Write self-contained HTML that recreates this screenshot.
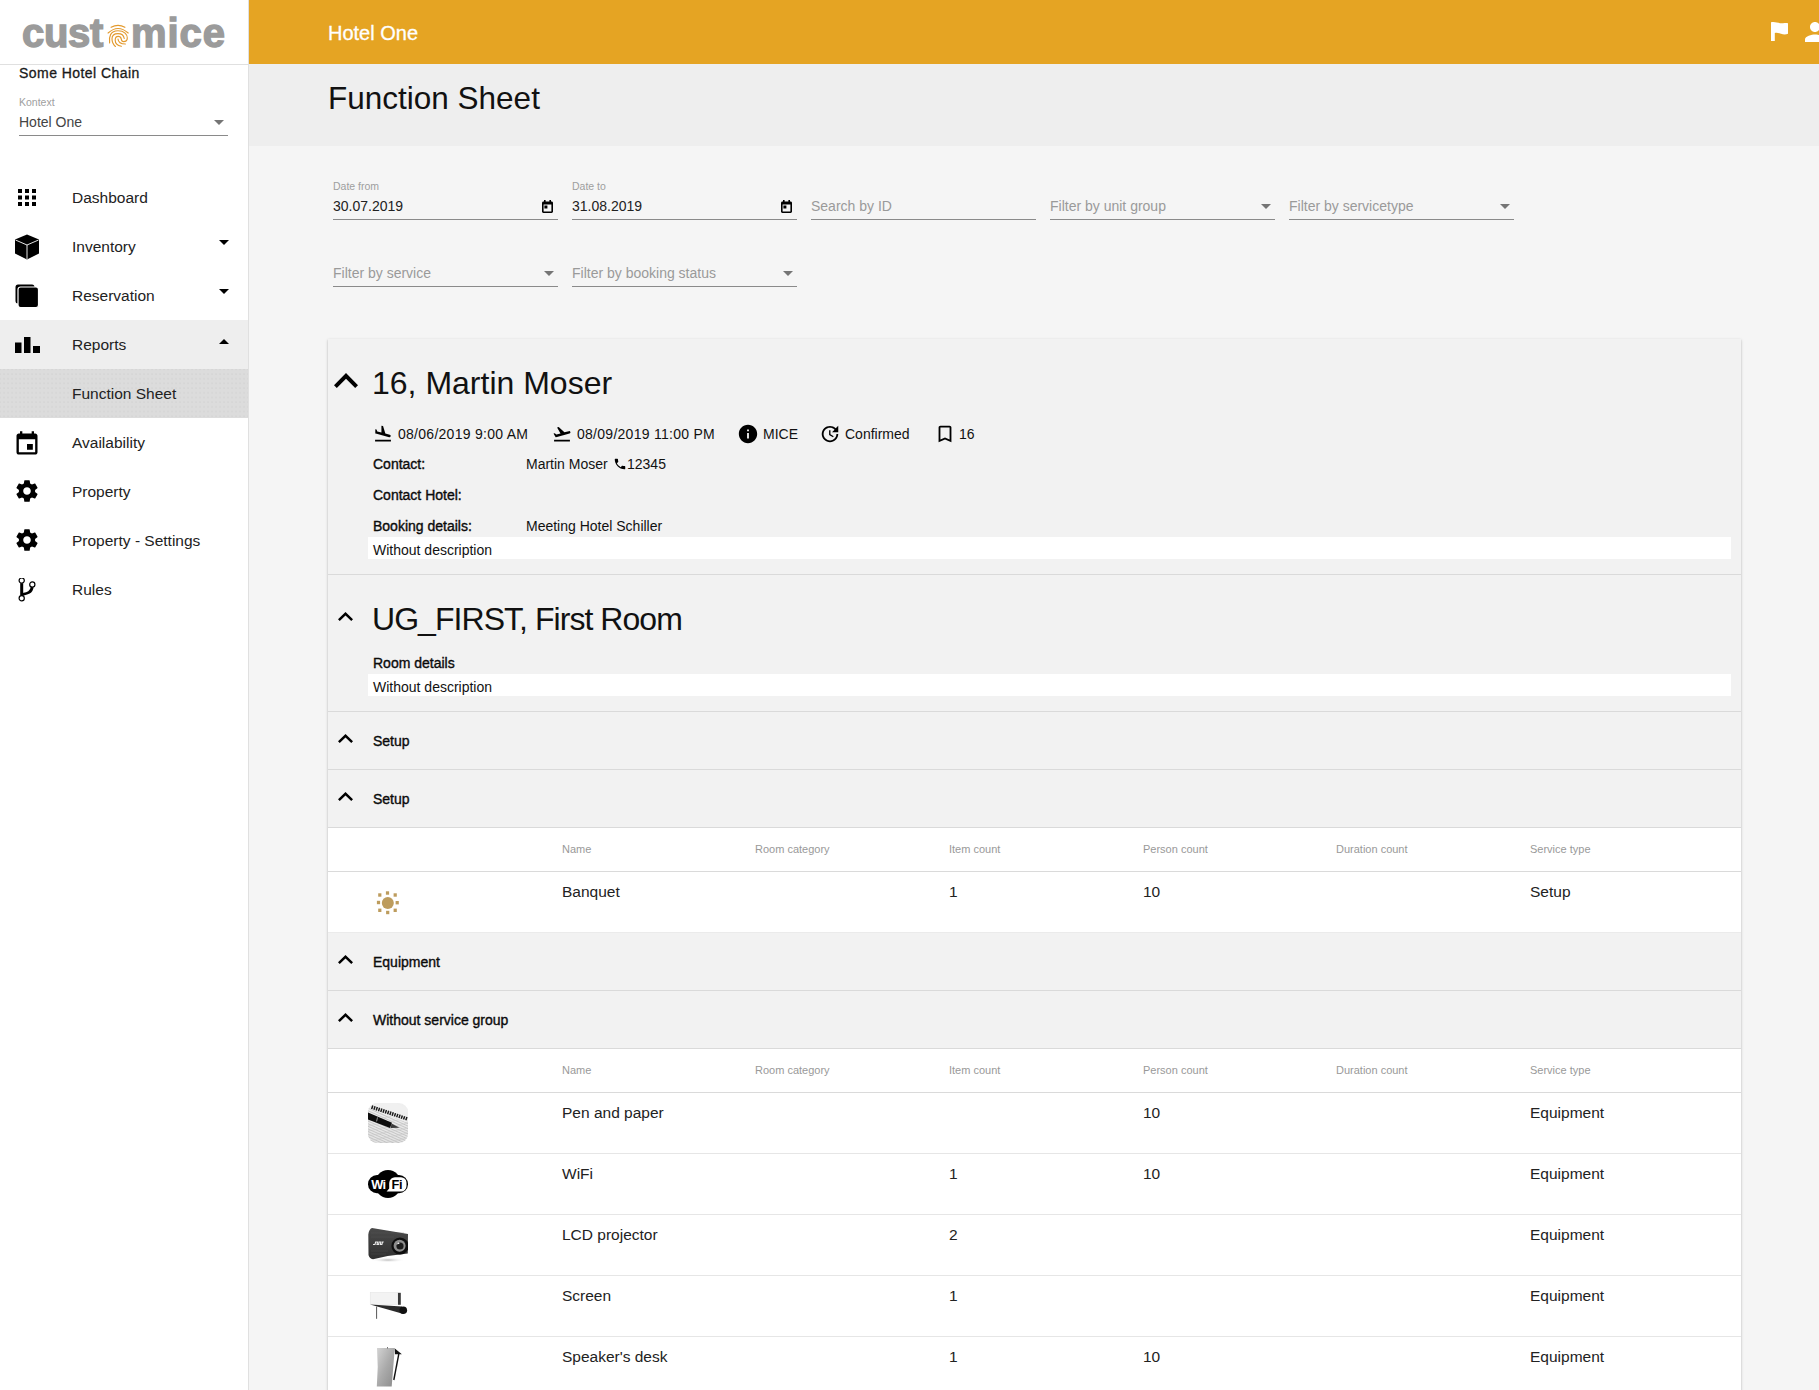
<!DOCTYPE html>
<html><head><meta charset="utf-8">
<style>
*{box-sizing:border-box;margin:0;padding:0}
html,body{width:1819px;height:1390px;overflow:hidden;background:#f5f5f5;font-family:"Liberation Sans",sans-serif;color:#000}
.abs{position:absolute}
#side{position:absolute;left:0;top:0;width:249px;height:1390px;background:#fff;border-right:1px solid #e0e0e0}
#logo{position:absolute;left:0;top:0;width:248px;height:65px;border-bottom:1px solid #e0e0e0}
#top{position:absolute;left:249px;top:0;width:1570px;height:64px;background:#e5a423}
#hdr{position:absolute;left:249px;top:64px;width:1570px;height:82px;background:#eeeeee}
.nav{position:absolute;left:0;width:248px;height:49px}
.nav .t{position:absolute;left:72px;top:0;line-height:49px;font-size:15.5px;color:#222}
.nav svg{position:absolute}
.tri{position:absolute;width:0;height:0;border-left:5px solid transparent;border-right:5px solid transparent}
.fld{position:absolute;width:225px;height:1px;background:#8a8a8a}
.lbl{position:absolute;font-size:10.5px;color:#9e9e9e}
.val{position:absolute;font-size:14px;color:#222}
.ph{position:absolute;font-size:14px;color:#9a9a9a}
#card{position:absolute;left:328px;top:339px;width:1413px;height:1100px;background:#f2f2f2;box-shadow:0 1px 3px rgba(0,0,0,.2),0 1px 1px rgba(0,0,0,.14),0 2px 1px -1px rgba(0,0,0,.12)}
.hl{position:absolute;left:0;width:1413px;height:1px;background:#dcdcdc}
.bold{font-weight:bold;letter-spacing:-0.35px}
.c14{position:absolute;font-size:14px;color:#111}
.wbox{position:absolute;left:40px;width:1363px;background:#fff}
.white{position:absolute;left:0;width:1413px;background:#fff}
.ct{position:absolute;white-space:nowrap;color:#111}
.ab{position:absolute}
.b{-webkit-text-stroke:0.35px #000}
.th{color:#999}
.td{color:#222}
</style></head><body>
<div id="side">
  <div id="logo">
    <div class="abs" style="left:22px;top:5px;font-size:40px;font-weight:bold;color:#9b9b9b;-webkit-text-stroke:1.4px #9b9b9b;letter-spacing:-0.3px;line-height:56px">cust</div>
    <svg class="abs" style="left:104px;top:20px" width="30" height="30" viewBox="0 0 30 30" fill="none" stroke="#e39a2e" stroke-width="1.15" stroke-linecap="round">
      <path d="M7.1 7.3 Q14 3.6 20.9 7.3"/><path d="M4.1 13 Q14 4 24.2 13"/>
      <path d="M5.6 22.9 C4.8 17 6.2 10.8 14 10.8 C20.5 10.8 23.3 14.5 23.3 18 C23.3 20.5 21.5 21.6 19.5 21.6 C18 21.6 17.5 20.5 17.3 19.2 C17 17.5 16 16.4 14.2 16.4 C12.3 16.4 11.2 18 11.2 20.3 C11.2 23 13.5 25.5 17.3 26.3"/>
      <path d="M11.4 26.5 C8.5 24 8 20.5 8 18.8 C8 15.5 10.5 13.6 14 13.6 C17.5 13.6 19.8 15.8 20.2 18.5"/>
      <path d="M14 19 C14.3 22.5 16.5 24 21.4 24"/>
    </svg>
    <div class="abs" style="left:131px;top:5px;font-size:40px;font-weight:bold;color:#9b9b9b;-webkit-text-stroke:1.4px #9b9b9b;letter-spacing:0.9px;line-height:56px">mice</div>
  </div>
  <div class="abs" style="left:19px;top:64px;font-size:14px;-webkit-text-stroke:0.3px #1a1a1a;letter-spacing:0.45px;color:#1a1a1a;line-height:18px">Some Hotel Chain</div>
  <div class="abs" style="left:19px;top:96px;font-size:10.5px;color:#a0a0a0;line-height:12px">Kontext</div>
  <div class="abs" style="left:19px;top:114px;font-size:14px;color:#444;line-height:16px">Hotel One</div>
  <div class="tri" style="left:214px;top:120px;border-top:5px solid #757575"></div>
  <div class="abs" style="left:19px;top:135px;width:209px;height:1px;background:#8a8a8a"></div>
  <div class="nav" style="top:173px">
    <svg style="left:18px;top:16px" width="18" height="18" viewBox="0 0 18 18"><g fill="#000"><rect x="0" y="0" width="4" height="4"/><rect x="7" y="0" width="4" height="4"/><rect x="14" y="0" width="4" height="4"/><rect x="0" y="6.5" width="4" height="4"/><rect x="7" y="6.5" width="4" height="4"/><rect x="14" y="6.5" width="4" height="4"/><rect x="0" y="13" width="4" height="4"/><rect x="7" y="13" width="4" height="4"/><rect x="14" y="13" width="4" height="4"/></g></svg>
    <div class="t">Dashboard</div>
  </div>
  <div class="nav" style="top:222px">
    <svg style="left:14px;top:12px" width="26" height="26" viewBox="0 0 26 26"><path d="M13 0.5 L25 5.5 L25 19.5 L13 25.5 L1 19.5 L1 5.5 Z" fill="#000"/><path d="M1.5 6 L13 11 L24.5 6 M13 11 L13 25" stroke="#fff" stroke-width="0.9" fill="none"/></svg>
    <div class="t">Inventory</div>
    <div class="tri" style="left:219px;top:18px;border-top:5px solid #000"></div>
  </div>
  <div class="nav" style="top:271px">
    <svg style="left:15px;top:13px" width="24" height="24" viewBox="0 0 24 24"><rect x="0.5" y="0.5" width="19" height="19" rx="2.5" fill="#000"/><rect x="3" y="3" width="20.5" height="20.5" rx="2.5" fill="#000" stroke="#fff" stroke-width="1.2"/></svg>
    <div class="t">Reservation</div>
    <div class="tri" style="left:219px;top:18px;border-top:5px solid #000"></div>
  </div>
  <div class="nav" style="top:320px;background:#eeeeee">
    <svg style="left:15px;top:17px" width="25" height="16" viewBox="0 0 25 16"><rect x="0" y="5.5" width="6.5" height="10.5" fill="#000"/><rect x="9" y="0" width="6.5" height="16" fill="#000"/><rect x="18" y="9" width="7" height="7" fill="#000"/></svg>
    <div class="t">Reports</div>
    <div class="tri" style="left:219px;top:19px;border-bottom:5px solid #000"></div>
  </div>
  <div class="nav" style="top:369px;background-color:#dcdcdc;background-image:radial-gradient(circle at 1px 1px,#d5d5d5 0.6px,transparent 0.9px);background-size:4px 4.7px;background-position:3px 4px">
    <div class="t">Function Sheet</div>
  </div>
  <div class="nav" style="top:418px">
    <svg style="left:13px;top:12px" width="28" height="28" viewBox="0 0 24 24"><path fill="#000" d="M17 12h-5v5h5v-5zM16 1v2H8V1H6v2H5c-1.11 0-1.99.9-1.99 2L3 19c0 1.1.89 2 2 2h14c1.1 0 2-.9 2-2V5c0-1.1-.9-2-2-2h-1V1h-2zm3 18H5V8h14v11z"/></svg>
    <div class="t">Availability</div>
  </div>
  <div class="nav" style="top:467px">
    <svg style="left:14px;top:11px" width="26" height="26" viewBox="0 0 24 24"><path fill="#000" d="M19.43 12.98c.04-.32.07-.64.07-.98s-.03-.66-.07-.98l2.11-1.65c.19-.15.24-.42.12-.64l-2-3.46c-.12-.22-.39-.3-.61-.22l-2.49 1c-.52-.4-1.08-.73-1.690-.98l-.38-2.65C14.46 2.18 14.25 2 14 2h-4c-.25 0-.46.18-.49.42l-.38 2.65c-.61.25-1.17.59-1.69.98l-2.49-1c-.23-.09-.49 0-.61.22l-2 3.46c-.13.22-.07.49.12.64l2.11 1.65c-.04.32-.07.65-.07.98s.03.66.07.98l-2.11 1.65c-.19.15-.24.42-.12.64l2 3.46c.12.22.39.3.61.22l2.49-1c.52.4 1.08.73 1.69.98l.38 2.65c.03.24.24.42.49.42h4c.25 0 .46-.18.49-.42l.38-2.65c.61-.25 1.17-.59 1.69-.98l2.49 1c.23.09.49 0 .61-.22l2-3.46c.12-.22.07-.49-.12-.64l-2.11-1.65zM12 15.5c-1.93 0-3.5-1.57-3.5-3.5s1.57-3.5 3.5-3.5 3.5 1.57 3.5 3.5-1.57 3.5-3.5 3.5z"/></svg>
    <div class="t">Property</div>
  </div>
  <div class="nav" style="top:516px">
    <svg style="left:14px;top:11px" width="26" height="26" viewBox="0 0 24 24"><path fill="#000" d="M19.43 12.98c.04-.32.07-.64.07-.98s-.03-.66-.07-.98l2.11-1.65c.19-.15.24-.42.12-.64l-2-3.46c-.12-.22-.39-.3-.61-.22l-2.49 1c-.52-.4-1.08-.73-1.690-.98l-.38-2.65C14.46 2.180 14.25 2 14 2h-4c-.25 0-.46.18-.49.42l-.38 2.65c-.61.25-1.17.59-1.69.98l-2.49-1c-.23-.09-.49 0-.61.22l-2 3.46c-.13.22-.07.49.12.64l2.11 1.65c-.04.32-.07.65-.07.98s.03.66.07.98l-2.11 1.65c-.19.15-.24.42-.12.64l2 3.46c.12.22.39.3.61.22l2.49-1c.52.4 1.08.73 1.69.98l.38 2.65c.03.24.24.42.49.42h4c.25 0 .46-.18.49-.42l.38-2.65c.61-.25 1.17-.59 1.69-.98l2.49 1c.23.09.49 0 .61-.22l2-3.46c.12-.22.07-.49-.12-.64l-2.11-1.65zM12 15.5c-1.93 0-3.5-1.57-3.5-3.5s1.57-3.5 3.5-3.5 3.5 1.57 3.5 3.5-1.57 3.5-3.5 3.5z"/></svg>
    <div class="t">Property - Settings</div>
  </div>
  <div class="nav" style="top:565px">
    <svg style="left:17px;top:13px" width="20" height="24" viewBox="0 0 20 24" fill="none" stroke="#000"><circle cx="4.7" cy="2.6" r="2.6" stroke-width="1.2"/><circle cx="15.3" cy="6.4" r="2.6" stroke-width="1.2"/><circle cx="4.7" cy="20.3" r="2.6" stroke-width="1.2"/><path d="M4.7 5.2 V17.7" stroke-width="3"/><path d="M4.6 16.6 C9.5 15.5 14.5 15 15.2 9" stroke-width="2.8"/></svg>
    <div class="t">Rules</div>
  </div>
</div>
<div id="top">
  <div class="abs" style="left:79px;top:21px;font-size:20px;color:#fff;-webkit-text-stroke:0.3px #fff;line-height:24px">Hotel One</div>
  <svg class="abs" style="left:1522px;top:22px" width="18" height="20" viewBox="0 0 18 20"><path fill="#fff" d="M0 0.3 C4 -0.8 8 1.5 12 1.2 C14 1 15.5 0.9 17 1.2 L17 11.8 C15 12.6 12.5 12.7 10 11.8 C7.5 10.9 6 10.6 3.8 10.9 L3.8 19 L0 19 Z"/></svg>
  <svg class="abs" style="left:1551px;top:17px" width="30" height="30" viewBox="0 0 24 24"><path fill="#fff" d="M12 12c2.21 0 4-1.790 4-4s-1.79-4-4-4-4 1.79-4 4 1.79 4 4 4zm0 2c-2.67 0-8 1.34-8 4v2h16v-2c0-2.66-5.33-4-8-4z"/></svg>
</div>
<div id="hdr">
  <div class="abs" style="left:79px;top:15px;font-size:31.5px;color:#111;line-height:38px">Function Sheet</div>
</div>

<div class="lbl" style="left:333px;top:180px;line-height:12px">Date from</div>
<div class="val" style="left:333px;top:198px;line-height:16px">30.07.2019</div>
<svg class="abs" style="left:542px;top:200px" width="11" height="13" viewBox="0 0 11 13"><path fill="#000" d="M2 0h1.6v1.5h3.8V0H9v1.5h.6c.8 0 1.4.6 1.4 1.4v8.7c0 .8-.6 1.4-1.4 1.4H1.4C.6 13 0 12.4 0 11.6V2.9c0-.8.6-1.5 1.4-1.5H2zM1.6 4.6v6.8h7.8V4.6zM2.4 5.6h3v3h-3z"/></svg>
<div class="fld" style="left:333px;top:219px"></div>
<div class="lbl" style="left:572px;top:180px;line-height:12px">Date to</div>
<div class="val" style="left:572px;top:198px;line-height:16px">31.08.2019</div>
<svg class="abs" style="left:781px;top:200px" width="11" height="13" viewBox="0 0 11 13"><path fill="#000" d="M2 0h1.6v1.5h3.8V0H9v1.5h.6c.8 0 1.4.6 1.4 1.4v8.7c0 .8-.6 1.4-1.4 1.4H1.4C.6 13 0 12.4 0 11.6V2.9c0-.8.6-1.5 1.4-1.5H2zM1.6 4.6v6.8h7.8V4.6zM2.4 5.6h3v3h-3z"/></svg>
<div class="fld" style="left:572px;top:219px"></div>
<div class="ph" style="left:811px;top:198px;line-height:16px">Search by ID</div>
<div class="fld" style="left:811px;top:219px"></div>
<div class="ph" style="left:1050px;top:198px;line-height:16px">Filter by unit group</div>
<div class="tri" style="left:1261px;top:204px;border-top:5px solid #757575"></div>
<div class="fld" style="left:1050px;top:219px"></div>
<div class="ph" style="left:1289px;top:198px;line-height:16px">Filter by servicetype</div>
<div class="tri" style="left:1500px;top:204px;border-top:5px solid #757575"></div>
<div class="fld" style="left:1289px;top:219px"></div>
<div class="ph" style="left:333px;top:265px;line-height:16px">Filter by service</div>
<div class="tri" style="left:544px;top:271px;border-top:5px solid #757575"></div>
<div class="fld" style="left:333px;top:286px"></div>
<div class="ph" style="left:572px;top:265px;line-height:16px">Filter by booking status</div>
<div class="tri" style="left:783px;top:271px;border-top:5px solid #757575"></div>
<div class="fld" style="left:572px;top:286px"></div>
<div id="card">
<svg class="ab" style="left:6px;top:34px" width="24" height="15" viewBox="6 8 12 7.41" preserveAspectRatio="none"><path d="M12 8l-6 6 1.41 1.41L12 10.83l4.59 4.58L18 14z" fill="#000"/></svg>
<div class="ct " style="left:44px;top:28.11px;font-size:32px;line-height:32px;">16, Martin Moser</div>
<svg class="ab" style="left:45px;top:85px" width="20" height="20" viewBox="0 0 24 24"><path fill="#000" d="M2.5 19h19v2h-19zm7.18-5.73l4.35 1.16 5.31 1.42c.8.21 1.62-.26 1.840-1.06.21-.8-.26-1.62-1.06-1.84l-5.31-1.42-2.76-9.02L10.12 2v8.28L5.15 8.95l-.93-2.32-1.45-.39v5.17l1.6.43 5.31 1.430z"/></svg>
<div class="ct " style="left:70px;top:88.25px;font-size:14px;line-height:14px;letter-spacing:0.27px">08/06/2019 9:00 AM</div>
<svg class="ab" style="left:224px;top:85px" width="20" height="20" viewBox="0 0 24 24"><path fill="#000" d="M2.5 19h19v2h-19zm19.57-9.36c-.21-.8-1.04-1.28-1.84-1.06L14.92 10l-6.9-6.43-1.93.51 4.14 7.17-4.97 1.33-1.97-1.54-1.45.39 1.82 3.16.77 1.33 1.6-.43 5.31-1.42 4.35-1.16L21 11.49c.81-.23 1.28-1.05 1.07-1.85z"/></svg>
<div class="ct " style="left:249px;top:88.25px;font-size:14px;line-height:14px;letter-spacing:0.27px">08/09/2019 11:00 PM</div>
<svg class="ab" style="left:409px;top:84px" width="22" height="22" viewBox="0 0 24 24"><path fill="#000" d="M12 2C6.48 2 2 6.48 2 12s4.48 10 10 10 10-4.48 10-10S17.52 2 12 2zm1 15h-2v-6h2v6zm0-8h-2V7h2v2z"/></svg>
<div class="ct " style="left:435px;top:88.25px;font-size:14px;line-height:14px;">MICE</div>
<svg class="ab" style="left:491px;top:84px" width="22" height="22" viewBox="0 0 24 24"><path fill="#000" d="M21 10.12h-6.78l2.74-2.82c-2.73-2.7-7.15-2.8-9.88-.1-2.73 2.71-2.73 7.08 0 9.79s7.15 2.71 9.88 0C18.32 15.65 19 14.08 19 12.1h2c0 1.98-.88 4.55-2.64 6.29-3.51 3.48-9.21 3.48-12.72 0-3.5-3.47-3.53-9.11-.02-12.58s9.14-3.47 12.65 0L21 3v7.12zM12.5 8v4.25l3.5 2.08-.72 1.21L11 13V8h1.5z"/></svg>
<div class="ct " style="left:517px;top:88.25px;font-size:14px;line-height:14px;">Confirmed</div>
<svg class="ab" style="left:606px;top:84px" width="22" height="22" viewBox="0 0 24 24"><path fill="#000" d="M17 3H7c-1.1 0-1.99.9-1.99 2L5 21l7-3 7 3V5c0-1.1-.9-2-2-2zm0 15l-5-2.18L7 18V5h10v13z"/></svg>
<div class="ct " style="left:631px;top:88.25px;font-size:14px;line-height:14px;">16</div>
<div class="ct b" style="left:45px;top:118.15px;font-size:14px;line-height:14px;">Contact:</div>
<div class="ct " style="left:198px;top:118.15px;font-size:14px;line-height:14px;">Martin Moser</div>
<svg class="ab" style="left:285px;top:118px" width="14" height="14" viewBox="0 0 24 24"><path fill="#000" d="M6.62 10.79c1.44 2.83 3.76 5.14 6.59 6.59l2.2-2.2c.27-.27.67-.36 1.02-.24 1.12.37 2.33.57 3.57.57.55 0 1 .45 1 1V20c0 .55-.45 1-1 1-9.39 0-17-7.61-17-17 0-.55.45-1 1-1h3.5c.55 0 1 .45 1 1 0 1.25.2 2.45.57 3.57.11.35.03.74-.25 1.02l-2.2 2.2z"/></svg>
<div class="ct " style="left:299px;top:118.15px;font-size:14px;line-height:14px;">12345</div>
<div class="ct b" style="left:45px;top:149.15px;font-size:14px;line-height:14px;">Contact Hotel:</div>
<div class="ct b" style="left:45px;top:180.15px;font-size:14px;line-height:14px;">Booking details:</div>
<div class="ct " style="left:198px;top:180.15px;font-size:14px;line-height:14px;">Meeting Hotel Schiller</div>
<div class="ab" style="left:40px;top:198px;width:1363px;height:22px;background:#fff"></div>
<div class="ct " style="left:45px;top:204.15px;font-size:14px;line-height:14px;">Without description</div>
<div class="ab" style="left:0;top:235px;width:1413px;height:1px;background:#dadada"></div>
<svg class="ab" style="left:10px;top:273px" width="15" height="9" viewBox="6 8 12 7.41" preserveAspectRatio="none"><path d="M12 8l-6 6 1.41 1.41L12 10.83l4.59 4.58L18 14z" fill="#000"/></svg>
<div class="ct " style="left:44px;top:263.91px;font-size:32px;line-height:32px;letter-spacing:-0.95px">UG_FIRST, First Room</div>
<div class="ct b" style="left:45px;top:317.15px;font-size:14px;line-height:14px;">Room details</div>
<div class="ab" style="left:40px;top:335px;width:1363px;height:22px;background:#fff"></div>
<div class="ct " style="left:45px;top:341.15px;font-size:14px;line-height:14px;">Without description</div>
<div class="ab" style="left:0;top:372px;width:1413px;height:1px;background:#dadada"></div>
<svg class="ab" style="left:10px;top:395px" width="15" height="9" viewBox="6 8 12 7.41" preserveAspectRatio="none"><path d="M12 8l-6 6 1.41 1.41L12 10.83l4.59 4.58L18 14z" fill="#000"/></svg>
<div class="ct b" style="left:45px;top:394.65px;font-size:14px;line-height:14px;">Setup</div>
<div class="ab" style="left:0;top:430px;width:1413px;height:1px;background:#dadada"></div>
<svg class="ab" style="left:10px;top:453px" width="15" height="9" viewBox="6 8 12 7.41" preserveAspectRatio="none"><path d="M12 8l-6 6 1.41 1.41L12 10.83l4.59 4.58L18 14z" fill="#000"/></svg>
<div class="ct b" style="left:45px;top:452.65px;font-size:14px;line-height:14px;">Setup</div>
<div class="ab" style="left:0;top:488px;width:1413px;height:1px;background:#dadada"></div>
<div class="ab" style="left:0px;top:489px;width:1413px;height:43px;background:#fff"></div>
<div class="ct th" style="left:234px;top:504.69px;font-size:11px;line-height:11px;">Name</div>
<div class="ct th" style="left:427px;top:504.69px;font-size:11px;line-height:11px;">Room category</div>
<div class="ct th" style="left:621px;top:504.69px;font-size:11px;line-height:11px;">Item count</div>
<div class="ct th" style="left:815px;top:504.69px;font-size:11px;line-height:11px;">Person count</div>
<div class="ct th" style="left:1008px;top:504.69px;font-size:11px;line-height:11px;">Duration count</div>
<div class="ct th" style="left:1202px;top:504.69px;font-size:11px;line-height:11px;">Service type</div>
<div class="ab" style="left:0;top:532px;width:1413px;height:1px;background:#dadada"></div>
<div class="ab" style="left:0px;top:533px;width:1413px;height:60px;background:#fff"></div>
<div class="ab" style="left:40px;top:543px;width:40px;height:40px"><svg width="40" height="40" viewBox="0 0 40 40"><g fill="#bd9c5d"><circle cx="19.8" cy="21" r="6"/><rect x="17.9" y="9.3" width="3.2" height="3.4"/><rect x="18.1" y="28.8" width="3.2" height="3.4"/><rect x="8.9" y="18.8" width="3.2" height="3.4"/><rect x="27.6" y="19.0" width="3.2" height="3.4"/><rect x="10.2" y="11.3" width="3.2" height="3.4"/><rect x="25.6" y="11.3" width="3.2" height="3.4"/><rect x="10.2" y="26.6" width="3.2" height="3.4"/><rect x="25.6" y="26.6" width="3.2" height="3.4"/></g></svg></div>
<div class="ct td" style="left:234px;top:545.38px;font-size:15.5px;line-height:15.5px;">Banquet</div>
<div class="ct td" style="left:621px;top:545.38px;font-size:15.5px;line-height:15.5px;">1</div>
<div class="ct td" style="left:815px;top:545.38px;font-size:15.5px;line-height:15.5px;">10</div>
<div class="ct td" style="left:1202px;top:545.38px;font-size:15.5px;line-height:15.5px;">Setup</div>
<div class="ab" style="left:0;top:593px;width:1413px;height:1px;background:#ebebeb"></div>
<svg class="ab" style="left:10px;top:616px" width="15" height="9" viewBox="6 8 12 7.41" preserveAspectRatio="none"><path d="M12 8l-6 6 1.41 1.41L12 10.83l4.59 4.58L18 14z" fill="#000"/></svg>
<div class="ct b" style="left:45px;top:615.65px;font-size:14px;line-height:14px;">Equipment</div>
<div class="ab" style="left:0;top:651px;width:1413px;height:1px;background:#dadada"></div>
<svg class="ab" style="left:10px;top:674px" width="15" height="9" viewBox="6 8 12 7.41" preserveAspectRatio="none"><path d="M12 8l-6 6 1.41 1.41L12 10.83l4.59 4.58L18 14z" fill="#000"/></svg>
<div class="ct b" style="left:45px;top:673.65px;font-size:14px;line-height:14px;">Without service group</div>
<div class="ab" style="left:0;top:709px;width:1413px;height:1px;background:#dadada"></div>
<div class="ab" style="left:0px;top:710px;width:1413px;height:43px;background:#fff"></div>
<div class="ct th" style="left:234px;top:725.69px;font-size:11px;line-height:11px;">Name</div>
<div class="ct th" style="left:427px;top:725.69px;font-size:11px;line-height:11px;">Room category</div>
<div class="ct th" style="left:621px;top:725.69px;font-size:11px;line-height:11px;">Item count</div>
<div class="ct th" style="left:815px;top:725.69px;font-size:11px;line-height:11px;">Person count</div>
<div class="ct th" style="left:1008px;top:725.69px;font-size:11px;line-height:11px;">Duration count</div>
<div class="ct th" style="left:1202px;top:725.69px;font-size:11px;line-height:11px;">Service type</div>
<div class="ab" style="left:0;top:753px;width:1413px;height:1px;background:#dadada"></div>
<div class="ab" style="left:0px;top:754px;width:1413px;height:60px;background:#fff"></div>
<div class="ab" style="left:40px;top:764px;width:40px;height:40px"><svg width="40" height="40" viewBox="0 0 40 40"><defs><linearGradient id="pg" x1="0" y1="0" x2="0" y2="1"><stop offset="0" stop-color="#f0f0f0"/><stop offset="1" stop-color="#e2e2e2"/></linearGradient><clipPath id="pc"><rect x="0" y="0" width="40" height="40" rx="9"/></clipPath></defs>
<rect x="0" y="0" width="40" height="40" rx="9" fill="url(#pg)"/>
<g clip-path="url(#pc)">
<g stroke="#b0b0b0" stroke-width="0.6"><path d="M-10 -2.0 L50 25.0 M-10 0.6 L50 27.6 M-10 3.2 L50 30.2 M-10 5.8 L50 32.8 M-10 8.4 L50 35.4 M-10 11.0 L50 38.0 M-10 13.6 L50 40.6 M-10 16.2 L50 43.2 M-10 18.8 L50 45.8 M-10 21.4 L50 48.4 M-10 24.0 L50 51.0 M-10 26.6 L50 53.6 M-10 29.2 L50 56.2 M-10 31.8 L50 58.8 M-10 34.4 L50 61.4 M-10 37.0 L50 64.0 M-10 39.6 L50 66.6 M-10 42.2 L50 69.2 M-10 44.8 L50 71.8 M-10 47.4 L50 74.4"/></g>
<g stroke="#c8c8c8" stroke-width="0.5"><path d="M-10 20.0 L50 8.0 M-10 25.0 L50 13.0 M-10 30.0 L50 18.0 M-10 35.0 L50 23.0 M-10 40.0 L50 28.0 M-10 45.0 L50 33.0 M-10 50.0 L50 38.0 M-10 55.0 L50 43.0 M-10 60.0 L50 48.0 M-10 65.0 L50 53.0 M-10 70.0 L50 58.0 M-10 75.0 L50 63.0"/></g>
<rect x="-2" y="-2" width="44" height="14" fill="#efefef" transform="rotate(21 20 6)" opacity="0.9"/>
<path d="M3.5 4 L39.5 16" stroke="#1a1a1a" stroke-width="3.6" stroke-dasharray="1.5 0.9"/>
<path d="M-1 9 L24 19.8 L22 25 L-1 16 Z" fill="#0d0d0d"/>
<path d="M9.5 14.4 L8.6 18.4" stroke="#ccc" stroke-width="0.7"/>
<path d="M23.5 20.5 L31.5 24.8 L22.5 25 Z" fill="#3a3a3a"/>
</g>
</svg></div>
<div class="ct td" style="left:234px;top:766.38px;font-size:15.5px;line-height:15.5px;">Pen and paper</div>
<div class="ct td" style="left:815px;top:766.38px;font-size:15.5px;line-height:15.5px;">10</div>
<div class="ct td" style="left:1202px;top:766.38px;font-size:15.5px;line-height:15.5px;">Equipment</div>
<div class="ab" style="left:0;top:814px;width:1413px;height:1px;background:#e6e6e6"></div>
<div class="ab" style="left:0px;top:815px;width:1413px;height:60px;background:#fff"></div>
<div class="ab" style="left:40px;top:825px;width:40px;height:40px"><svg width="40" height="40" viewBox="0 0 40 40">
<rect x="0" y="11" width="40" height="18.2" rx="9" fill="#000"/>
<ellipse cx="20" cy="20" rx="13" ry="14" fill="#000"/>
<path d="M27.5 13.2 H33 a5.5 5.5 0 0 1 5.5 5.5 V22 a5.5 5.5 0 0 1 -5.5 5.5 H18.6 L21.2 24.6 V19 a5.8 5.8 0 0 1 6.3 -5.8z" fill="#fff"/>
<text x="3.2" y="24.8" font-family="Liberation Sans" font-weight="bold" font-size="12.8" fill="#fff" letter-spacing="-0.6">Wi</text>
<text x="23.6" y="24.8" font-family="Liberation Sans" font-weight="bold" font-size="12.8" fill="#000" letter-spacing="-0.4">Fi</text>
</svg></div>
<div class="ct td" style="left:234px;top:827.38px;font-size:15.5px;line-height:15.5px;">WiFi</div>
<div class="ct td" style="left:621px;top:827.38px;font-size:15.5px;line-height:15.5px;">1</div>
<div class="ct td" style="left:815px;top:827.38px;font-size:15.5px;line-height:15.5px;">10</div>
<div class="ct td" style="left:1202px;top:827.38px;font-size:15.5px;line-height:15.5px;">Equipment</div>
<div class="ab" style="left:0;top:875px;width:1413px;height:1px;background:#e6e6e6"></div>
<div class="ab" style="left:0px;top:876px;width:1413px;height:60px;background:#fff"></div>
<div class="ab" style="left:40px;top:886px;width:40px;height:40px"><svg width="40" height="40" viewBox="0 0 40 40"><defs><radialGradient id="sh" cx="0.5" cy="0.5" r="0.5"><stop offset="0" stop-color="#bbb"/><stop offset="1" stop-color="#fff" stop-opacity="0"/></radialGradient><linearGradient id="pb" x1="0" y1="0" x2="0" y2="1"><stop offset="0" stop-color="#4a4a4a"/><stop offset="1" stop-color="#303030"/></linearGradient></defs>
<ellipse cx="20" cy="35" rx="17" ry="2.5" fill="url(#sh)"/>
<path d="M4 3 Q1 4 0.3 9.5 L0.5 30 Q1.2 33.5 5 34.3 Q22 30 39.8 28.5 L40 9 Z" fill="url(#pb)"/>
<g stroke="#5a5a5a" stroke-width="0.4" opacity="0.8"><path d="M3 8 H36 M3 12 H26 M3 26 H20 M3 29 H18"/></g>
<circle cx="32" cy="21" r="8.6" fill="#0e0e0e"/>
<circle cx="31.6" cy="20.8" r="6" fill="#8c8c8c"/>
<circle cx="32" cy="21" r="3.6" fill="#1c1c1c"/>
<path d="M28.2 19.5 l2.6 -2.2 l0.8 1.4 z" fill="#f0f0f0"/>
<path d="M5 19.5 h2 l0.6 -2.5 h2 l-0.6 2.5 h1.5 l0.6 -2.5 h1.8 l-0.6 2.5 h1.6 l0.6 -2.5 h1.2" stroke="#e8e8e8" stroke-width="1.1" fill="none"/>
</svg></div>
<div class="ct td" style="left:234px;top:888.38px;font-size:15.5px;line-height:15.5px;">LCD projector</div>
<div class="ct td" style="left:621px;top:888.38px;font-size:15.5px;line-height:15.5px;">2</div>
<div class="ct td" style="left:1202px;top:888.38px;font-size:15.5px;line-height:15.5px;">Equipment</div>
<div class="ab" style="left:0;top:936px;width:1413px;height:1px;background:#e6e6e6"></div>
<div class="ab" style="left:0px;top:937px;width:1413px;height:60px;background:#fff"></div>
<div class="ab" style="left:40px;top:947px;width:40px;height:40px"><svg width="40" height="40" viewBox="0 0 40 40">
<rect x="2.2" y="6.4" width="27.6" height="12" fill="#f3f3f3" stroke="#e2e2e2" stroke-width="0.5"/>
<rect x="30" y="6.8" width="2.8" height="12" fill="#3a3a3a"/>
<path d="M2.2 18.4 L34 20.5 L35.5 28 Z" fill="#2a2a2a"/>
<circle cx="35.3" cy="24.3" r="3.8" fill="#111"/>
<rect x="8" y="20.5" width="1.1" height="12.3" fill="#666"/>
</svg></div>
<div class="ct td" style="left:234px;top:949.38px;font-size:15.5px;line-height:15.5px;">Screen</div>
<div class="ct td" style="left:621px;top:949.38px;font-size:15.5px;line-height:15.5px;">1</div>
<div class="ct td" style="left:1202px;top:949.38px;font-size:15.5px;line-height:15.5px;">Equipment</div>
<div class="ab" style="left:0;top:997px;width:1413px;height:1px;background:#e6e6e6"></div>
<div class="ab" style="left:0px;top:998px;width:1413px;height:60px;background:#fff"></div>
<div class="ab" style="left:40px;top:1008px;width:40px;height:40px"><svg width="40" height="40" viewBox="0 0 40 40"><defs><linearGradient id="dg" x1="0" y1="0" x2="1" y2="1"><stop offset="0" stop-color="#d4d4d4"/><stop offset="0.5" stop-color="#aaa"/><stop offset="1" stop-color="#8a8a8a"/></linearGradient></defs>
<path d="M9 1.1 L26.8 1.1 L23.7 39.6 L8.8 39.6 Q10.6 20 9 1.1 Z" fill="url(#dg)"/>
<path d="M26.8 1.4 L33.9 7.2 L27 7.2 Z" fill="#111"/>
<path d="M30.8 7 L25.8 33" stroke="#111" stroke-width="1.4"/>
<path d="M19.5 0 V1.5" stroke="#555" stroke-width="0.8"/>
</svg></div>
<div class="ct td" style="left:234px;top:1010.38px;font-size:15.5px;line-height:15.5px;">Speaker's desk</div>
<div class="ct td" style="left:621px;top:1010.38px;font-size:15.5px;line-height:15.5px;">1</div>
<div class="ct td" style="left:815px;top:1010.38px;font-size:15.5px;line-height:15.5px;">10</div>
<div class="ct td" style="left:1202px;top:1010.38px;font-size:15.5px;line-height:15.5px;">Equipment</div>
</div><!--endcard-->
</body></html>
